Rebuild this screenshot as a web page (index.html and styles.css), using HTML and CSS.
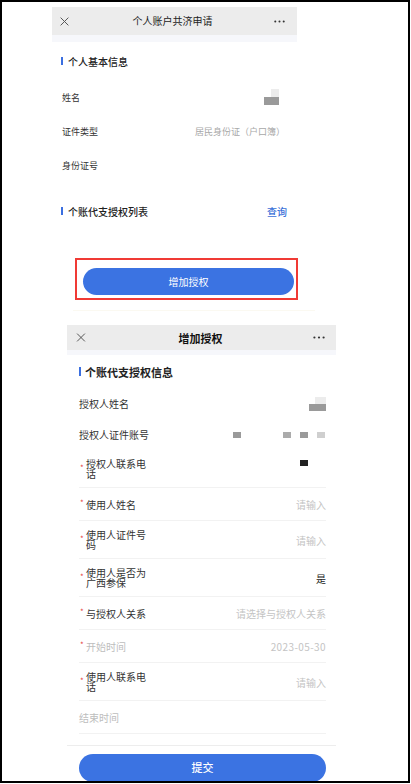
FILE: index.html
```html
<!DOCTYPE html>
<html lang="zh-CN">
<head>
<meta charset="utf-8">
<title>个人账户共济申请</title>
<link rel="stylesheet" href="styles.css">
</head>
<body>
<div class="frame">
  <section class="shot shot-top">
    <header class="nav nav-top">
      <svg class="ico-close" viewBox="0 0 10 10" width="9" height="9"><path d="M1 1L9 9M9 1L1 9" stroke="#555" stroke-width="1.1" fill="none" stroke-linecap="round"/></svg>
      <div class="nav-title">个人账户共济申请</div>
      <svg class="ico-more" viewBox="0 0 12 3" width="11" height="3"><circle cx="1.4" cy="1.5" r="1.1" fill="#333"/><circle cx="6" cy="1.5" r="1.1" fill="#333"/><circle cx="10.6" cy="1.5" r="1.1" fill="#333"/></svg>
    </header>
    <div class="strip"></div>
    <div class="sec-title sec-basic"><span class="bar"></span>个人基本信息</div>
    <div class="info-row">
      <span class="info-label">姓名</span>
      <span class="mask-name"><i class="m-light"></i><i class="m-dark"></i></span>
    </div>
    <div class="info-row">
      <span class="info-label">证件类型</span>
      <span class="info-value">居民身份证（户口簿）</span>
    </div>
    <div class="info-row">
      <span class="info-label">身份证号</span>
      <span class="info-value"></span>
    </div>
    <div class="sec-title sec-list"><span class="bar"></span><span class="sec-text">个账代支授权列表</span><span class="query">查询</span></div>
    <div class="highlight"><div class="pill pill-add">增加授权</div></div>
    <div class="faint-line"></div>
  </section>

  <section class="shot shot-bottom">
    <header class="nav nav-bottom">
      <svg class="ico-close" viewBox="0 0 10 10" width="10" height="9"><path d="M1 1L9 9M9 1L1 9" stroke="#555" stroke-width="1.1" fill="none" stroke-linecap="round"/></svg>
      <div class="nav-title nav-title-bold">增加授权</div>
      <svg class="ico-more" viewBox="0 0 12 3" width="12" height="3"><circle cx="1.4" cy="1.5" r="1.1" fill="#333"/><circle cx="6" cy="1.5" r="1.1" fill="#333"/><circle cx="10.6" cy="1.5" r="1.1" fill="#333"/></svg>
    </header>
    <div class="strip strip-b"></div>
    <div class="sec-title sec-auth"><span class="bar"></span>个账代支授权信息</div>
    <div class="form">
      <div class="plain-row">
        <span class="plain-label">授权人姓名</span>
        <span class="mask-name mask-auth"><i class="m-light"></i><i class="m-dark"></i></span>
      </div>
      <div class="plain-row">
        <span class="plain-label">授权人证件账号</span>
        <span class="mask-id">
          <i class="b b1"></i><i class="b b2"></i><i class="b b3"></i><i class="b b4"></i>
        </span>
      </div>
      <div class="f-row">
        <span class="f-label"><span class="star">*</span><span class="f-text">授权人联系电话</span></span>
        <span class="f-value"><i class="b-black"></i></span>
      </div>
      <div class="f-row">
        <span class="f-label"><span class="star">*</span><span class="f-text">使用人姓名</span></span>
        <span class="f-value ph">请输入</span>
      </div>
      <div class="f-row">
        <span class="f-label"><span class="star">*</span><span class="f-text">使用人证件号码</span></span>
        <span class="f-value ph">请输入</span>
      </div>
      <div class="f-row">
        <span class="f-label"><span class="star">*</span><span class="f-text">使用人是否为广西参保</span></span>
        <span class="f-value dark">是</span>
      </div>
      <div class="f-row">
        <span class="f-label"><span class="star">*</span><span class="f-text">与授权人关系</span></span>
        <span class="f-value ph">请选择与授权人关系</span>
      </div>
      <div class="f-row">
        <span class="f-label"><span class="star">*</span><span class="f-text muted">开始时间</span></span>
        <span class="f-value ph date">2023-05-30</span>
      </div>
      <div class="f-row">
        <span class="f-label"><span class="star">*</span><span class="f-text">使用人联系电话</span></span>
        <span class="f-value ph">请输入</span>
      </div>
      <div class="f-row">
        <span class="f-label"><span class="f-text f-wide muted">结束时间</span></span>
        <span class="f-value"></span>
      </div>
    </div>
    <div class="full-line"></div>
    <div class="pill pill-submit">提交</div>
  </section>
</div>
</body>
</html>
```

FILE: styles.css
```css
* { box-sizing: border-box; margin: 0; padding: 0; }
html, body { background: #fff; }
body {
  margin: 0;
  font-family: "Noto Sans CJK SC", "Noto Sans", sans-serif;
  color: #333;
}
i { display: block; font-style: normal; }

.frame {
  width: 410px;
  height: 783px;
  border: 2px solid #000;
  overflow: hidden;
  background: #fff;
  display: flex;
  flex-direction: column;
  align-items: flex-start;
}

.shot { background: #fff; flex: none; }
.shot-top { width: 245px; height: 318px; margin: 5px 0 0 50px; }
.shot-bottom { width: 269px; margin-left: 65px; }

/* nav bars */
.nav {
  display: grid;
  grid-template-columns: 1fr auto 1fr;
  align-items: center;
  background: #ececec;
}
.nav-top { height: 28px; padding: 0 12px 0 8px; }
.nav-bottom { height: 25px; padding: 0 11px 0 9px; }
.nav .ico-close { justify-self: start; }
.nav .ico-more { justify-self: end; }
.nav-title { font-size: 10px; line-height: 14px; color: #222; }
.nav-title-bold { font-size: 11px; font-weight: 700; color: #111; }

.strip { height: 7px; background: #f6f7fb; }
.strip-b { height: 5px; }

/* section titles */
.sec-title {
  display: flex;
  align-items: center;
  font-size: 10px;
  font-weight: 500;
  color: #222;
}
.bar { width: 2px; height: 8px; background: #3b6fe0; margin-right: 5px; flex: none; }
.sec-basic { height: 38px; padding-left: 9px; }
.sec-list { height: 34px; margin-top: 12px; padding: 0 10px 0 9px; }
.sec-list .sec-text { flex: 1; }
.query { color: #3a6fd8; font-size: 10px; font-weight: 500; }
.sec-auth { height: 33px; padding-left: 12px; font-size: 11px; font-weight: 600; }
.sec-auth .bar { height: 9px; margin-right: 4px; }

/* top info rows */
.info-row {
  height: 34px;
  display: flex;
  align-items: center;
  justify-content: space-between;
  padding: 0 12px 0 10px;
  font-size: 9px;
}
.info-label { color: #333; }
.info-value { color: #a8a8a8; }

.mask-name { display: flex; flex-direction: column; align-items: flex-end; margin-right: 6px; }
.mask-name .m-light { width: 8px; height: 8px; background: #ececec; }
.mask-name .m-dark { width: 15px; height: 8px; background: #9a9a9a; }
.mask-auth { margin-right: 0; }
.mask-auth .m-light { width: 11px; height: 7px; }
.mask-auth .m-dark { width: 17px; height: 7px; }

.highlight {
  width: 223px;
  height: 42px;
  margin: 30px 0 0 23px;
  border: 2px solid #f03a35;
  padding: 8px 2px 3px 6px;
}
.pill {
  background: #3b73e2;
  color: #fff;
  border-radius: 14px;
  display: flex;
  align-items: center;
  justify-content: center;
}
.pill-add { height: 27px; font-size: 10px; }
.faint-line { height: 1px; margin: 10px 0 0 21px; width: 242px; background: #fbf9f1; }

/* bottom form */
.form { padding: 0 10px 0 12px; }
.plain-row {
  height: 31px;
  display: flex;
  align-items: center;
  justify-content: space-between;
  font-size: 10px;
}
.plain-label { color: #333; }
.mask-id { display: flex; align-items: center; }
.mask-id .b { width: 8px; height: 6px; }
.mask-id .b1 { background: #9a9a9a; margin-right: 42px; }
.mask-id .b2 { background: #ababab; margin-right: 9px; }
.mask-id .b3 { background: #9a9a9a; margin-right: 9px; }
.mask-id .b4 { background: #cfcfcf; margin-right: 1px; }

.f-row {
  display: flex;
  align-items: center;
  padding: 9px 0 8px;
  border-bottom: 1px solid #f2f2f2;
}
.f-label { display: flex; align-items: center; flex: none; }
.star {
  width: 7px;
  flex: none;
  color: #e64340;
  font-size: 8px;
  line-height: 8px;
  padding-left: 1px;
  margin-top: -3px;
}
.f-text { width: 63px; font-size: 10px; line-height: 10px; color: #333; }
.f-wide { width: 70px; }
.f-text.muted { color: #bdbdbd; }
.f-value {
  flex: 1;
  display: flex;
  justify-content: flex-end;
  font-size: 10px;
  line-height: 15px;
  min-height: 15px;
  color: #333;
}
.f-value.ph { color: #c4c4c4; }
.f-value.date { letter-spacing: 0.4px; }
.f-value.dark { color: #222; }
.b-black { width: 8px; height: 6px; background: #222; margin-right: 18px; margin-top: -2px; }

.full-line { height: 1px; background: #ededed; margin-top: 11px; }
.pill-submit {
  height: 28px;
  margin: 8px 10px 0 12px;
  font-size: 11px;
  font-weight: 500;
  align-items: flex-start;
  padding-top: 6px;
  line-height: 14px;
}
```
